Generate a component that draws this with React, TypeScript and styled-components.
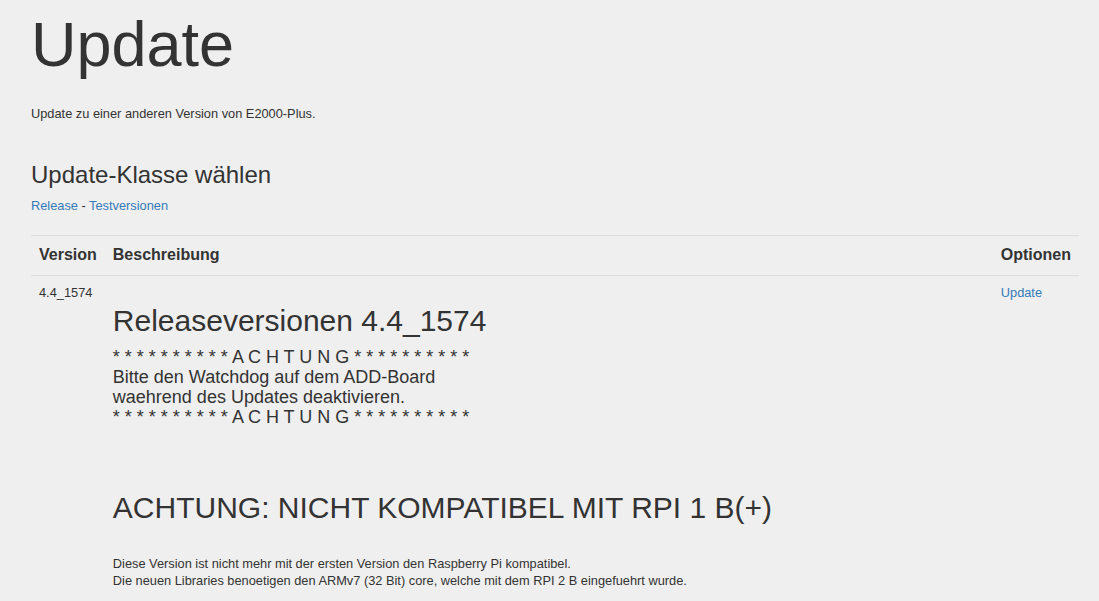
import React from "react";
import styled, { createGlobalStyle } from "styled-components";

const GlobalStyle = createGlobalStyle`
  body {
    margin: 0;
    background-color: #efefef;
    color: #333;
    font-family: "Liberation Sans", Arial, Helvetica, sans-serif;
  }
`;

const release = {
  version: "4.4_1574",
  title: "Releaseversionen 4.4_1574",
  notice: [
    "* * * * * * * * * * A C H T U N G * * * * * * * * * *",
    "Bitte den Watchdog auf dem ADD-Board",
    "waehrend des Updates deaktivieren.",
    "* * * * * * * * * * A C H T U N G * * * * * * * * * *",
  ],
  warning: "ACHTUNG: NICHT KOMPATIBEL MIT RPI 1 B(+)",
  details: [
    "Diese Version ist nicht mehr mit der ersten Version den Raspberry Pi kompatibel.",
    "Die neuen Libraries benoetigen den ARMv7 (32 Bit) core, welche mit dem RPI 2 B eingefuehrt wurde.",
  ],
};

const App: React.FC = () => {
  return (
    <Page>
      <GlobalStyle />
      <Title>Update</Title>
      <Lead>Update zu einer anderen Version von E2000-Plus.</Lead>
      <SectionTitle>Update-Klasse wählen</SectionTitle>
      <ClassLinks>
        <Link href="#">Release</Link> - <Link href="#">Testversionen</Link>
      </ClassLinks>
      <Table>
        <thead>
          <tr>
            <Th $narrow>Version</Th>
            <Th>Beschreibung</Th>
            <Th $narrow>Optionen</Th>
          </tr>
        </thead>
        <tbody>
          <tr>
            <Td>{release.version}</Td>
            <Td>
              <ReleaseTitle>{release.title}</ReleaseTitle>
              <Notice>
                {release.notice.map((line, i) => (
                  <div key={i}>{line}</div>
                ))}
              </Notice>
              <ReleaseTitle $gap={64}>{release.warning}</ReleaseTitle>
              <Details>
                {release.details.map((line, i) => (
                  <div key={i}>{line}</div>
                ))}
              </Details>
            </Td>
            <Td>
              <Link href="#">Update</Link>
            </Td>
          </tr>
        </tbody>
      </Table>
    </Page>
  );
};

const Page = styled.div`
  padding: 0 20px 0 31px;
`;

const Title = styled.h1`
  font-size: 63px;
  font-weight: 400;
  line-height: 1.1;
  margin: 10px 0 26px;
`;

const Lead = styled.p`
  font-size: 12.8px;
  line-height: 17px;
  margin: 0;
`;

const SectionTitle = styled.h3`
  font-size: 24px;
  font-weight: 400;
  line-height: 1.1;
  margin: 40px 0 8px;
`;

const ClassLinks = styled.div`
  font-size: 12.8px;
  line-height: 17px;
  margin-bottom: 21px;
`;

const Link = styled.a`
  color: #337ab7;
  text-decoration: none;
`;

const Table = styled.table`
  width: 100%;
  border-collapse: collapse;
  border-spacing: 0;
`;

const Th = styled.th<{ $narrow?: boolean }>`
  text-align: left;
  font-size: 16px;
  font-weight: 700;
  line-height: 1.42857;
  padding: 8px;
  border-top: 1px solid #dddddd;
  border-bottom: 1px solid #dddddd;
  white-space: nowrap;
  width: ${(p) => (p.$narrow ? "1%" : "auto")};
`;

const Td = styled.td`
  vertical-align: top;
  font-size: 12.8px;
  line-height: 17px;
  padding: 8px;
`;

const ReleaseTitle = styled.h2<{ $gap?: number }>`
  font-size: 30px;
  font-weight: 400;
  line-height: 1.1;
  margin: ${(p) => p.$gap ?? 20}px 0 10px;
`;

const Notice = styled.div`
  font-size: 18px;
  line-height: 20px;
`;

const Details = styled.div`
  margin-top: 31px;
  font-size: 12.8px;
  line-height: 17.5px;
`;

export default App;
